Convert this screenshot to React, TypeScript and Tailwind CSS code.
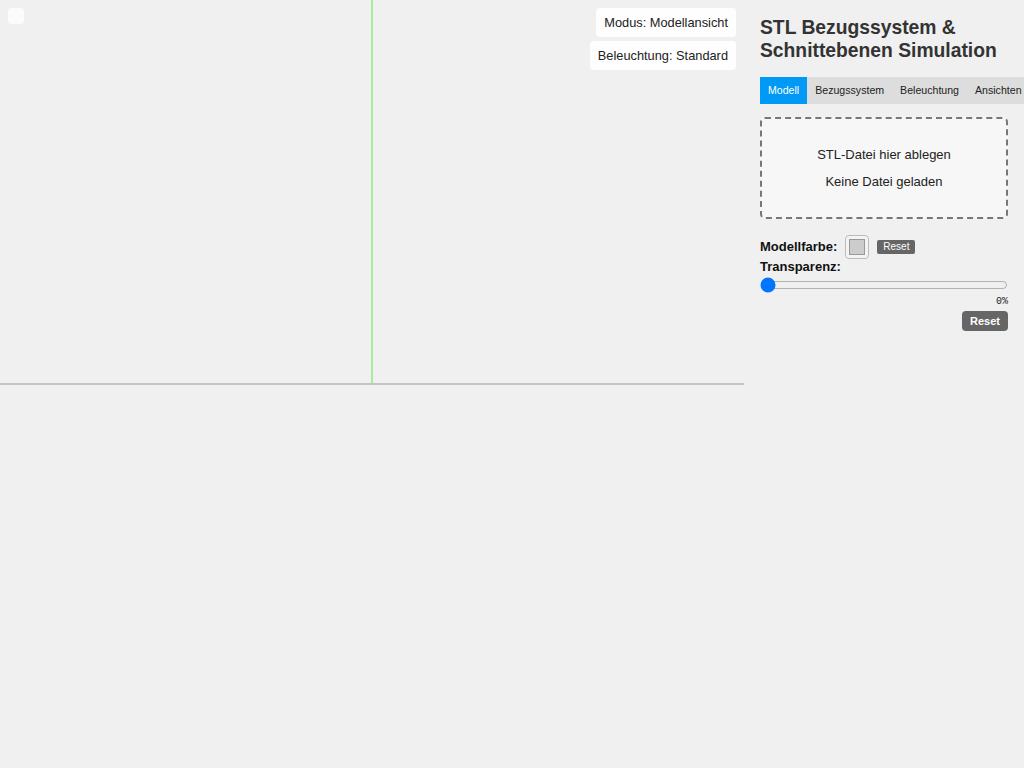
import { useState } from 'react';

const tabs = ['Modell', 'Bezugssystem', 'Beleuchtung', 'Ansichten'];

function Viewport() {
  return (
    <div className="relative h-full w-[744px] shrink-0">
      {/* grid axes of the 3d view */}
      <svg className="absolute inset-0 h-full w-full" width="744" height="768">
        <line x1="0" y1="384" x2="744" y2="384" stroke="#c4c4c4" strokeWidth="2" />
        <line x1="372" y1="0" x2="372" y2="383" stroke="#a8ec9e" strokeWidth="2" />
      </svg>
      <button className="absolute left-2 top-2 h-4 w-4 rounded bg-white/80" aria-label="Menü" />
      <div className="absolute right-2 top-2 flex flex-col items-end gap-1 text-[12.8px] text-[#222]">
        <div className="rounded bg-white/90 px-2 py-[6px] leading-[17px]">Modus: Modellansicht</div>
        <div className="rounded bg-white/90 px-2 py-[6px] leading-[17px]">Beleuchtung: Standard</div>
      </div>
    </div>
  );
}

function Sidebar() {
  const [active, setActive] = useState('Modell');
  const [opacity, setOpacity] = useState(0);

  return (
    <aside className="h-full w-[280px] shrink-0 px-4 pt-4">
      <h1 className="text-[19.3px] font-bold leading-[23px] text-[#333]">
        STL Bezugssystem &amp; Schnittebenen Simulation
      </h1>

      <div className="mt-[15px] flex w-max bg-[#dddddd]">
        {tabs.map((t) => (
          <button
            key={t}
            onClick={() => setActive(t)}
            className={
              t === active
                ? 'h-[27px] bg-[#0099f5] px-2 text-[10.6px] text-white'
                : 'h-[27px] px-2 text-[10.6px] text-[#222]'
            }
          >
            {t}
          </button>
        ))}
      </div>

      <div className="mt-[13px] flex h-[102px] w-[248px] flex-col items-center justify-center gap-[11px] rounded-[5px] border-2 border-dashed border-[#777] bg-[#f7f7f7] text-[13px] leading-[16px] text-[#222]">
        <p>STL-Datei hier ablegen</p>
        <p>Keine Datei geladen</p>
      </div>

      <div className="mt-[16px] flex items-center gap-2">
        <label className="text-[13px] font-bold text-[#111]">Modellfarbe:</label>
        <input
          type="color"
          defaultValue="#cccccc"
          className="h-[24px] w-[24px] cursor-pointer rounded border border-[#bbb] bg-[#f4f4f4] p-0 [&::-webkit-color-swatch]:rounded-none [&::-webkit-color-swatch]:border-[#999] [&::-webkit-color-swatch-wrapper]:p-[3px]"
        />
        <button className="rounded-[2px] bg-[#666] px-[6px] text-[10px] leading-[14px] text-white">Reset</button>
      </div>

      <label className="block text-[13px] font-bold leading-[15px] text-[#111]">Transparenz:</label>
      <input
        type="range"
        min={0}
        max={100}
        value={opacity}
        onChange={(e) => setOpacity(Number(e.target.value))}
        className="mt-[3px] block w-[248px]"
      />
      <div className="mt-[3px] text-right font-['Liberation_Mono',monospace] text-[10px] leading-[12px] text-[#222]">
        {opacity}%
      </div>
      <div className="mt-[3px] flex justify-end">
        <button className="h-[20px] rounded bg-[#666] px-2 text-[11px] font-bold text-white">Reset</button>
      </div>
    </aside>
  );
}

export default function App() {
  return (
    <div className="flex h-screen w-screen overflow-hidden bg-[#f0f0f0] font-['Liberation_Sans',Arial,sans-serif]">
      <Viewport />
      <Sidebar />
    </div>
  );
}
